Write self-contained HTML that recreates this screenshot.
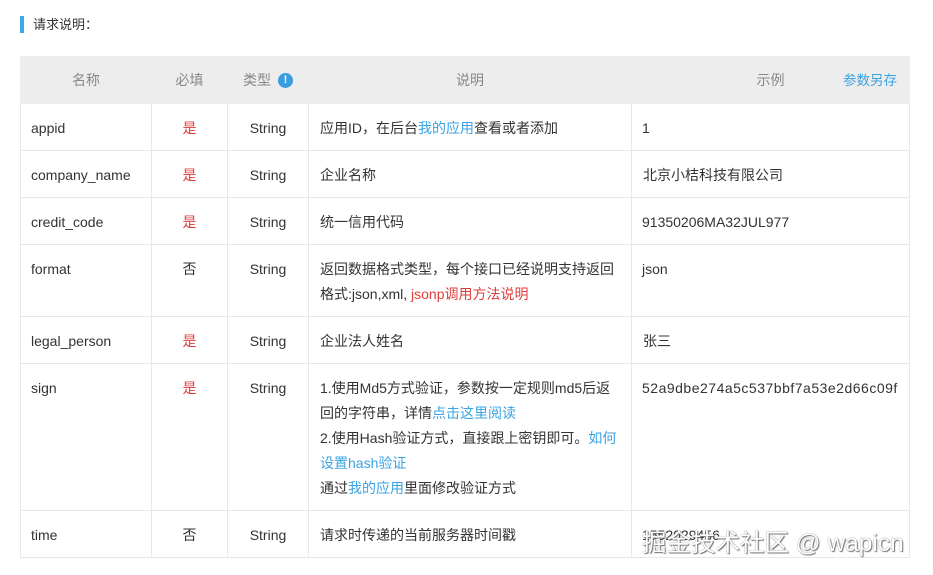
<!DOCTYPE html>
<html><head><meta charset="utf-8">
<style>
*{margin:0;padding:0;box-sizing:border-box}
body{width:933px;height:575px;background:#fff;font-family:"Liberation Sans","Noto Sans CJK SC",sans-serif;color:#333;position:relative;overflow:hidden}
.title{position:absolute;left:20px;top:16px;height:17px;border-left:4px solid #3aa9e6;padding-left:9px;font-size:13px;line-height:17px;color:#333}
table{position:absolute;left:20px;top:56px;border-collapse:collapse;table-layout:fixed;width:889px}
td,th{border:1px solid #e8e8e8;font-size:14px;line-height:25px;vertical-align:top;padding:12px 10px 0 10px;font-weight:normal}
th{background:#eeeded;color:#888;height:47px;border-color:#eeeded;text-align:center;vertical-align:middle;padding:1px 10px 0}
td.c{text-align:center}
td.d{font-size:14px;padding-left:11px}
.r{color:#e03c3c}
.b{color:#3aa3e3}
.bang{display:inline-block;width:15px;height:15px;border-radius:50%;background:#3a9de0;color:#fff;font-size:11px;line-height:15px;text-align:center;font-weight:bold;vertical-align:2px;margin-left:3px}
.save{position:absolute;left:843px;top:71px;font-size:13.5px;line-height:20px;color:#3aa3e3}
.wm{position:absolute;left:642px;top:524px;font-size:24.5px;color:#fff;text-shadow:0 0 1px #555,1px 1px 1px #777;white-space:nowrap}
</style></head><body>
<div class="title">请求说明：</div>
<table>
<colgroup><col style="width:131px"><col style="width:76px"><col style="width:81px"><col style="width:323px"><col style="width:278px"></colgroup>
<tr><th>名称</th><th>必填</th><th>类型 <span class="bang">!</span></th><th>说明</th><th>示例</th></tr>
<tr style="height:47px"><td>appid</td><td class="c r">是</td><td class="c">String</td><td class="d">应用ID，在后台<span class="b">我的应用</span>查看或者添加</td><td>1</td></tr>
<tr style="height:47px"><td>company_name</td><td class="c r">是</td><td class="c">String</td><td class="d">企业名称</td><td class="d">北京小桔科技有限公司</td></tr>
<tr style="height:47px"><td>credit_code</td><td class="c r">是</td><td class="c">String</td><td class="d">统一信用代码</td><td>91350206MA32JUL977</td></tr>
<tr style="height:72px"><td>format</td><td class="c">否</td><td class="c">String</td><td class="d">返回数据格式类型，每个接口已经说明支持返回<br>格式:json,xml, <span class="r">jsonp调用方法说明</span></td><td>json</td></tr>
<tr style="height:47px"><td>legal_person</td><td class="c r">是</td><td class="c">String</td><td class="d">企业法人姓名</td><td class="d">张三</td></tr>
<tr style="height:147px"><td>sign</td><td class="c r">是</td><td class="c">String</td><td class="d">1.使用Md5方式验证，参数按一定规则md5后返<br>回的字符串，详情<span class="b">点击这里阅读</span><br>2.使用Hash验证方式，直接跟上密钥即可。<span class="b">如何<br>设置hash验证</span><br>通过<span class="b">我的应用</span>里面修改验证方式</td><td style="font-size:14px;letter-spacing:0.5px;white-space:nowrap">52a9dbe274a5c537bbf7a53e2d66c09f</td></tr>
<tr style="height:47px"><td>time</td><td class="c">否</td><td class="c">String</td><td class="d">请求时传递的当前服务器时间戳</td><td>1552029456</td></tr>
</table>
<div class="save">参数另存</div>
<div class="wm">掘金技术社区 @ wapicn</div>
</body></html>
